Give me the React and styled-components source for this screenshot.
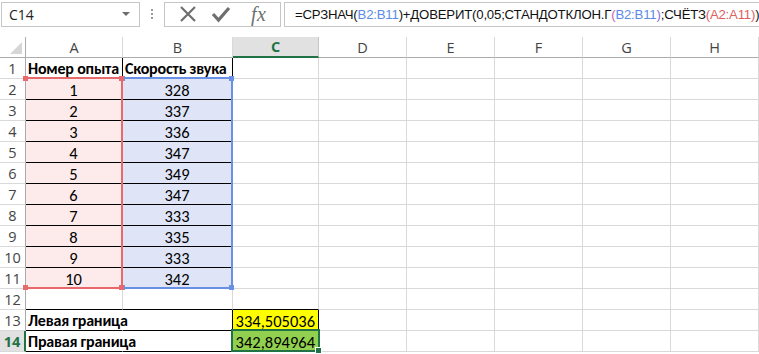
import styled, { createGlobalStyle, css } from 'styled-components';

const GlobalStyle = createGlobalStyle`
  html, body {
    margin: 0;
    padding: 0;
    background: #fff;
  }
  * {
    box-sizing: border-box;
  }
`;

const COLS = [26, 97, 110, 86, 88, 88, 88, 88, 88];
const LETTERS = ['A', 'B', 'C', 'D', 'E', 'F', 'G', 'H'];
const GRID = '#d9d9d9';
const HEAD_LINE = '#ababab';
const GREEN = '#217346';
const RED = '#e8696b';
const BLUE = '#6891e6';

const Page = styled.div`
  width: 759px;
  height: 354px;
  overflow: hidden;
  font-family: 'Segoe UI', 'Open Sans', 'Noto Sans', sans-serif;
  color: #222;
`;

const FormulaBar = styled.div`
  display: flex;
  align-items: center;
  height: 37px;
  padding: 0 0 9px 1px;
`;

const NameBox = styled.div`
  width: 139px;
  height: 25px;
  border: 1px solid #c6c6c6;
  display: flex;
  align-items: center;
  justify-content: space-between;
  padding: 0 7px;
  font-size: 14px;
  color: #222;
`;

const Caret = styled.span`
  width: 0;
  height: 0;
  border-left: 4px solid transparent;
  border-right: 4px solid transparent;
  border-top: 4px solid #6d6d6d;
  margin-right: 2px;
`;

const Grip = styled.div`
  width: 24px;
  display: flex;
  flex-direction: column;
  align-items: center;
  gap: 2px;
  span {
    width: 2px;
    height: 2px;
    background: #9a9a9a;
  }
`;

const IconBox = styled.div`
  width: 117px;
  height: 25px;
  border: 1px solid #c6c6c6;
  display: flex;
  align-items: center;
  padding-left: 14px;
  gap: 14px;
  color: #777;
`;

const Fx = styled.span`
  font-family: 'Liberation Serif', 'DejaVu Serif', serif;
  font-style: italic;
  font-size: 20px;
  color: #6f6f6f;
  margin-left: 6px;
  letter-spacing: 0.5px;
`;

const FormulaInput = styled.div`
  flex: 1;
  height: 25px;
  margin-left: 3px;
  border: 1px solid #c6c6c6;
  border-right: none;
  display: flex;
  align-items: center;
  padding-left: 10px;
  font-family: 'Liberation Sans', Arial, sans-serif;
  font-size: 13.2px;
  letter-spacing: -0.2px;
  white-space: nowrap;
  overflow: hidden;
  color: #111;
`;

const Ref = styled.span`
  color: ${(p) => p.$color};
`;

const Sheet = styled.div`
  position: relative;
  display: grid;
  grid-template-columns: ${COLS.map((c) => c + 'px').join(' ')};
  grid-auto-rows: 21px;
`;

const Corner = styled.div`
  border-right: 1px solid ${HEAD_LINE};
  border-bottom: 1px solid ${HEAD_LINE};
  display: flex;
  align-items: flex-end;
  justify-content: flex-end;
  padding: 0 3px 3px 0;
`;

const ColHead = styled.div`
  display: flex;
  align-items: center;
  justify-content: center;
  font-size: 14.5px;
  color: #444;
  border-right: 1px solid ${GRID};
  border-bottom: 1px solid ${HEAD_LINE};
  ${(p) =>
    p.$active &&
    css`
      background: #e1e1e1;
      color: ${GREEN};
      font-weight: 700;
      border-bottom: 2px solid ${GREEN};
      border-right-color: #c6c6c6;
    `}
`;

const RowHead = styled.div`
  display: flex;
  align-items: center;
  justify-content: center;
  font-size: 14.5px;
  color: #444;
  border-right: 1px solid ${HEAD_LINE};
  border-bottom: 1px solid ${GRID};
  ${(p) =>
    p.$active &&
    css`
      background: #e1e1e1;
      color: ${GREEN};
      font-weight: 700;
      border-right: 2px solid ${GREEN};
    `}
`;

const Cell = styled.div`
  display: flex;
  align-items: center;
  justify-content: ${(p) => p.$align || 'flex-start'};
  padding: 1px 3px 0 2px;
  font-family: Carlito, Calibri, Lato, 'Liberation Sans', sans-serif;
  font-size: ${(p) => (p.$bold ? '16px' : '16.5px')};
  letter-spacing: ${(p) => (p.$bold ? '-0.2px' : '0')};
  font-weight: ${(p) => (p.$bold ? 700 : 400)};
  color: #000;
  background: ${(p) => p.$bg || 'transparent'};
  border-right: 1px solid ${(p) => p.$br || GRID};
  border-bottom: 1px solid ${(p) => p.$bb || GRID};
  white-space: nowrap;
  position: relative;
  z-index: ${(p) => (p.$over ? 1 : 0)};
`;

const RangeBox = styled.div`
  position: absolute;
  left: ${(p) => p.$x}px;
  top: ${(p) => p.$y}px;
  width: ${(p) => p.$w}px;
  height: ${(p) => p.$h}px;
  border: 2px solid ${(p) => p.$color};
  border-left-color: ${(p) => (p.$noLeft ? 'transparent' : p.$color)};
  pointer-events: none;
  z-index: 2;
`;

const Handle = styled.span`
  position: absolute;
  width: 5px;
  height: 5px;
  background: ${(p) => p.$color};
  ${(p) => (p.$top ? 'top: -3px;' : 'bottom: -3px;')}
  ${(p) => (p.$left ? 'left: -3px;' : 'right: -3px;')}
`;

const Selection = styled.div`
  position: absolute;
  left: 231px;
  top: 292px;
  width: 89px;
  height: 23px;
  border: 2px solid ${GREEN};
  z-index: 3;
`;

const FillHandle = styled.span`
  position: absolute;
  right: -4px;
  bottom: -4px;
  width: 7px;
  height: 7px;
  background: ${GREEN};
  border: 1px solid #fff;
`;

const values = [328, 337, 336, 347, 349, 347, 333, 335, 333, 342];

function cellsForRow(r) {
  const row = LETTERS.map(() => ({}));
  if (r === 1) {
    row[0] = { text: 'Номер опыта', bold: true, br: '#000', bb: '#000' };
    row[1] = { text: 'Скорость звука', bold: true, br: '#000', bb: '#000' };
  } else if (r >= 2 && r <= 11) {
    row[0] = { text: String(r - 1), align: 'center', bg: '#fcebea', bb: '#000', br: '#000' };
    row[1] = { text: String(values[r - 2]), align: 'center', bg: '#dfe5f7', bb: '#000', br: '#000' };
  } else if (r === 12) {
    row[0] = { bb: '#000' };
    row[1] = { bb: '#000' };
    row[2] = { bb: '#000' };
  } else if (r === 13) {
    row[0] = { text: 'Левая граница', bold: true, bb: '#000', br: 'transparent', over: true };
    row[1] = { bb: '#000', br: '#000' };
    row[2] = { text: '334,505036', align: 'flex-end', bg: '#ffff00', bb: '#000', br: '#000' };
  } else if (r === 14) {
    row[0] = { text: 'Правая граница', bold: true, bb: '#000', br: 'transparent', over: true };
    row[1] = { bb: '#000', br: '#000' };
    row[2] = { text: '342,894964', align: 'flex-end', bg: '#92d050', bb: '#000', br: '#000' };
  }
  return row;
}

function Range({ color, x, y, w, h, noLeft }) {
  return (
    <RangeBox $color={color} $x={x} $y={y} $w={w} $h={h} $noLeft={noLeft}>
      <Handle $color={color} $top $left />
      <Handle $color={color} $top />
      <Handle $color={color} $left />
      <Handle $color={color} />
    </RangeBox>
  );
}

function App() {
  const rows = Array.from({ length: 14 }, (_, i) => i + 1);
  return (
    <Page>
      <GlobalStyle />
      <FormulaBar>
        <NameBox>
          C14
          <Caret />
        </NameBox>
        <Grip>
          <span />
          <span />
          <span />
        </Grip>
        <IconBox>
          <svg width="18" height="18" viewBox="0 0 18 18">
            <path d="M2 2 L16 16 M16 2 L2 16" stroke="#6f6f6f" strokeWidth="2.2" fill="none" />
          </svg>
          <svg width="20" height="18" viewBox="0 0 20 18">
            <path d="M2 9 L7.5 15 L18 3" stroke="#6f6f6f" strokeWidth="3.2" fill="none" />
          </svg>
          <Fx>fx</Fx>
        </IconBox>
        <FormulaInput>
          =СРЗНАЧ(<Ref $color="#5b8be6">B2:B11</Ref>)+ДОВЕРИТ(0,05;СТАНДОТКЛОН.Г
          <Ref $color="#d060a8">(</Ref>
          <Ref $color="#5b8be6">B2:B11</Ref>
          <Ref $color="#8a6fd8">)</Ref>;СЧЁТЗ<Ref $color="#e06060">(A2:A11)</Ref>)
        </FormulaInput>
      </FormulaBar>
      <Sheet>
        <Corner>
          <svg width="12" height="12" viewBox="0 0 12 12">
            <polygon points="12,0 12,12 0,12" fill="#d6d6d6" />
          </svg>
        </Corner>
        {LETTERS.map((l) => (
          <ColHead key={l} $active={l === 'C'}>
            {l}
          </ColHead>
        ))}
        {rows.map((r) => [
          <RowHead key={'h' + r} $active={r === 14}>
            {r}
          </RowHead>,
          ...cellsForRow(r).map((c, i) => (
            <Cell
              key={r + '-' + i}
              $align={c.align}
              $bold={c.bold}
              $bg={c.bg}
              $bb={c.bb}
              $br={c.br}
              $over={c.over}
            >
              {c.text}
            </Cell>
          )),
        ])}
        <Range color={BLUE} x={121} y={40} w={112} h={212} />
        <Range color={RED} x={24} y={40} w={99} h={212} noLeft />
        <Selection>
          <FillHandle />
        </Selection>
      </Sheet>
    </Page>
  );
}

export default App;
